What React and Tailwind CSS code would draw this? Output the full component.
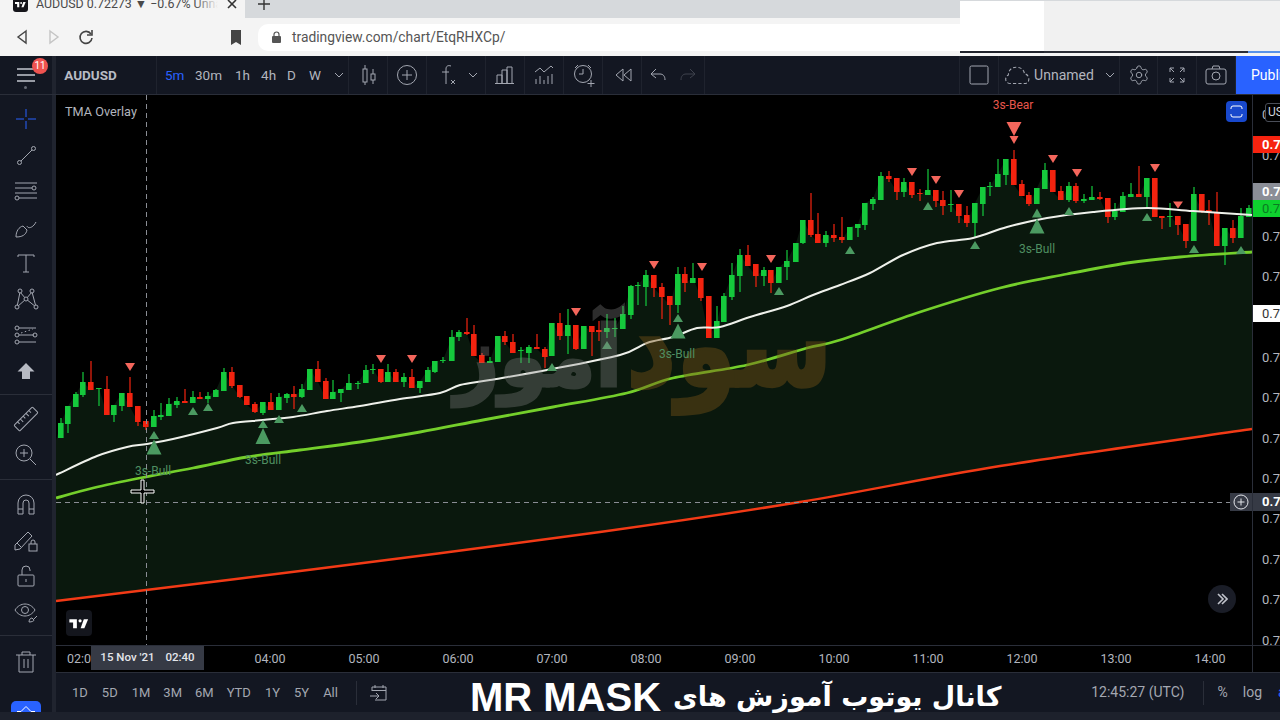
import React from "react";
import { Settings } from "lucide-react";

const CANDLES = [
  [61,423,438,418,438,"g"],[68,406,424,406,433,"g"],[76,394,407,392,407,"g"],[83,382,395,372,397,"g"],[91,382,390,361,390,"r"],[99,388,389,388,406,"g"],[107,389,415,376,415,"r"],[114,405,415,405,422,"g"],[122,393,406,393,411,"g"],[130,393,407,377,407,"r"],[138,406,422,406,426,"r"],[146,421,427,421,430,"r"],[154,416,427,410,427,"g"],[161,415,417,403,420,"g"],[169,404,416,398,416,"g"],[177,401,405,397,408,"g"],[185,401,403,389,403,"r"],[193,397,403,391,403,"g"],[200,397,399,392,399,"r"],[208,396,399,392,403,"g"],[216,390,397,389,397,"g"],[224,372,391,368,391,"g"],[232,372,386,367,388,"r"],[240,385,397,385,398,"r"],[247,396,405,396,405,"r"],[255,404,412,402,413,"r"],[263,402,413,402,415,"g"],[271,402,410,393,410,"r"],[279,397,410,393,410,"g"],[287,394,398,393,403,"g"],[294,394,397,386,409,"r"],[302,389,397,384,398,"g"],[310,369,390,369,390,"g"],[318,369,382,361,382,"r"],[326,381,399,378,399,"r"],[333,392,399,380,399,"g"],[341,389,393,389,402,"g"],[349,383,390,374,390,"g"],[358,383,384,381,389,"g"],
  [366,370,383,365,383,"g"],[373,369,370,364,374,"g"],[381,369,382,369,383,"r"],[388,372,382,364,382,"g"],[396,372,382,369,382,"r"],[404,377,382,373,387,"g"],[412,377,388,369,388,"r"],[420,381,388,381,393,"g"],[428,370,382,367,382,"g"],[435,361,372,361,373,"g"],[443,360,361,357,363,"g"],
  [452,337,361,330,361,"g"],[459,332,337,330,341,"g"],[467,332,334,318,335,"r"],[474,334,356,325,356,"r"],[482,355,363,353,363,"r"],[490,361,363,357,363,"g"],[498,336,362,336,362,"g"],[505,336,342,331,345,"r"],[513,342,353,334,353,"r"],[521,350,351,347,363,"g"],[529,347,353,345,363,"g"],[537,347,349,334,349,"r"],[545,349,357,347,368,"r"],[552,323,356,323,356,"g"],[560,323,336,313,340,"r"],[568,325,336,309,354,"g"],[576,325,349,325,350,"r"],[584,326,349,326,349,"g"],[592,326,332,326,356,"r"],[599,330,332,321,341,"r"],[607,328,332,314,338,"g"],[615,328,329,318,337,"g"],[623,314,329,306,329,"g"],[631,286,315,285,319,"g"],[638,285,286,282,305,"g"],[646,275,287,270,306,"g"],[654,275,288,275,297,"r"],[662,287,297,283,319,"r"],[670,296,305,296,325,"r"],[678,274,305,267,313,"g"],[685,274,283,267,292,"r"],[693,278,283,263,283,"g"],[701,278,298,278,301,"r"],[709,296,338,296,338,"r"],[717,321,338,306,338,"g"],[724,296,322,293,322,"g"],[732,275,297,263,300,"g"],[740,255,276,249,292,"g"],[748,255,266,245,266,"r"],[756,264,276,264,287,"r"],[764,270,276,267,286,"g"],[771,270,283,270,293,"r"],[779,267,283,267,283,"g"],[787,261,267,250,280,"g"],
  [796,243,262,243,262,"g"],[803,220,243,220,244,"g"],[811,220,235,193,237,"r"],[818,234,243,213,243,"r"],[826,235,243,231,247,"g"],[834,235,238,224,242,"r"],[842,237,240,217,243,"r"],[850,227,240,227,240,"g"],[858,224,228,224,237,"g"],
  [865,203,225,203,230,"g"],[873,199,204,197,210,"g"],[881,176,200,172,200,"g"],[889,176,179,171,182,"r"],[897,178,192,178,200,"r"],[904,182,192,178,197,"g"],[912,182,195,182,198,"r"],[920,193,194,189,201,"r"],[928,190,195,169,195,"g"],[936,190,201,190,207,"r"],[943,200,206,191,215,"r"],[951,204,205,190,212,"g"],[959,204,216,204,223,"r"],[967,215,223,206,227,"r"],[975,203,223,203,237,"g"],[983,187,204,187,216,"g"],[990,186,187,182,196,"g"],[998,174,187,159,187,"g"],[1006,159,175,159,185,"g"],[1014,159,185,150,185,"r"],[1022,184,196,180,196,"r"],[1029,195,204,192,206,"r"],[1037,188,204,188,204,"g"],[1045,170,189,163,189,"g"],[1053,170,192,170,192,"r"],[1061,191,200,186,200,"r"],[1069,186,200,182,202,"g"],[1076,186,201,183,203,"r"],[1084,199,201,194,203,"g"],[1092,197,200,186,200,"g"],[1100,197,199,192,200,"r"],[1108,198,217,198,223,"r"],[1115,211,217,203,220,"g"],[1123,196,212,192,212,"g"],[1131,194,197,183,197,"g"],[1139,194,197,166,197,"r"],[1147,178,197,178,208,"g"],[1155,178,217,178,217,"r"],[1162,216,218,216,229,"r"],[1170,216,217,203,227,"g"],[1178,216,225,216,235,"r"],[1186,224,241,224,248,"r"],[1194,194,241,187,241,"g"],[1202,194,211,194,213,"r"],[1209,210,212,200,225,"r"],[1217,212,246,192,246,"r"],[1225,228,246,228,265,"g"],[1233,228,238,220,243,"r"],[1241,216,238,208,238,"g"],[1249,208,217,205,217,"g"],
];

const WHITE = [[56,475],[60,473],[97,456],[127,447],[147,444],[173,439],[217,428],[233,423],[263,420],[293,417],[327,411],[360,406],[400,399],[440,393],[460,385],[490,380],[547,370],[620,355],[647,343],[673,337],[697,328],[720,327],[750,317],[787,306],[813,295],[840,285],[870,273],[903,255],[937,243],[973,238],[1007,227],[1047,218],[1093,212],[1147,208],[1193,211],[1252,215]];
const LIME = [[56,498],[93,488],[140,478],[193,468],[247,457],[300,450],[360,442],[420,432],[483,420],[553,407],[627,393],[673,378],[747,365],[807,348],[840,340],[920,312],[1000,288],[1067,274],[1127,263],[1180,257],[1252,252]];
const RED = [[56,601],[300,571],[600,532],[800,502],[1000,466],[1252,429]];

function smooth(pts) {
  let d = `M${pts[0][0]} ${pts[0][1]}`;
  for (let i = 0; i < pts.length - 1; i++) {
    const p0 = pts[Math.max(i - 1, 0)];
    const p1 = pts[i];
    const p2 = pts[i + 1];
    const p3 = pts[Math.min(i + 2, pts.length - 1)];
    const c1x = p1[0] + (p2[0] - p0[0]) / 6;
    const c1y = p1[1] + (p2[1] - p0[1]) / 6;
    const c2x = p2[0] - (p3[0] - p1[0]) / 6;
    const c2y = p2[1] - (p3[1] - p1[1]) / 6;
    d += `C${c1x} ${c1y} ${c2x} ${c2y} ${p2[0]} ${p2[1]}`;
  }
  return d;
}

const FILL = [
  "56,440",
  ...CANDLES.map(([x, t, b, , , c]) => `${x},${c === "g" ? t : b}`),
  "1252,212",
  ...[...RED].reverse().map(([x, y]) => `${x},${y}`),
].join(" ");

const DOWN = [[130,367,10,8],[381,359,10,8],[412,359,10,8],[576,312,10,8],[654,265,10,8],[702,267,10,8],[771,259,10,8],[912,172,10,8],[936,180,10,8],[959,194,10,8],[1053,159,10,8],[1077,173,10,8],[1155,168,10,8],[1178,205,10,7],[1014,129,15,14],[1014,140,9,8]];
const UP = [[154,435,10,8],[154,447,15,15],[193,411,10,8],[208,407,10,8],[263,424,10,8],[263,436,15,16],[279,419,10,8],[302,408,10,8],[552,367,10,8],[607,345,10,8],[678,318,10,8],[678,331,15,15],[779,291,10,8],[850,250,10,8],[928,206,10,8],[975,245,10,8],[1037,213,10,9],[1037,226,15,15],[1069,211,10,8],[1147,217,10,8],[1194,249,10,8],[1241,250,10,8]];

function Ico({ children, className = "text-[#a3a7b1]", size = 28 }) {
  return (
    <svg width={size} height={size} viewBox="0 0 28 28" fill="none" stroke="currentColor" strokeWidth="1" className={className}>
      {children}
    </svg>
  );
}

function Logo({ className, width = 18, height = 14 }) {
  return (
    <svg width={width} height={height} viewBox="0 0 36 28" fill="currentColor" className={className}>
      <path d="M14 6H0v6h7v11h7z" />
      <circle cx="20" cy="9" r="3" />
      <path d="M28 23h-7l6-17h8z" />
    </svg>
  );
}

function Cell({ w, children, last }) {
  return (
    <div className={`${w} h-full flex items-center justify-center shrink-0 ${last ? "" : "border-r border-[#1f232e]"}`}>
      {children}
    </div>
  );
}

const Chevron = () => (
  <svg width="10" height="6" viewBox="0 0 10 6" fill="none" stroke="#a3a7b1" strokeWidth="1">
    <path d="M1 1l4 4 4-4" />
  </svg>
);

function Chrome() {
  return (
    <div className="relative h-[56px] shrink-0 bg-[#f4f4f4] overflow-hidden">
      <div className="h-[18px] flex bg-[#d6d9dc]">
        <div className="relative w-[245px] h-full bg-[#f4f4f4] flex items-start pl-[13px] overflow-hidden">
          <div className="w-[15px] h-[15px] -mt-[3px] rounded-[3px] bg-[#15151a] flex items-center justify-center text-white shrink-0">
            <Logo width={11} height={9} />
          </div>
          <div className="relative w-[182px] ml-[8px] -mt-[5px] text-[12.4px] leading-[18px] text-[#4a4a4a] whitespace-nowrap overflow-hidden">
            AUDUSD 0.72273 ▼ −0.67% Unnamed
            <div className="absolute right-0 top-0 h-full w-[24px] bg-gradient-to-r from-transparent to-[#f4f4f4]" />
          </div>
          <svg width="10" height="10" viewBox="0 0 10 10" stroke="#333" strokeWidth="1.6" className="ml-[9px] -mt-[1px] shrink-0">
            <path d="M1 1l8 8M9 1l-8 8" />
          </svg>
        </div>
        <svg width="12" height="12" viewBox="0 0 12 12" stroke="#333" strokeWidth="1.4" className="ml-[13px] -mt-[2px] shrink-0">
          <path d="M6 0v12M0 6h12" />
        </svg>
      </div>
      <div className="h-[38px] flex items-center">
        <svg width="12" height="16" viewBox="0 0 12 16" fill="none" stroke="#444" strokeWidth="1.4" className="ml-[16px] shrink-0">
          <path d="M10 2L2 8l8 6z" />
        </svg>
        <svg width="12" height="16" viewBox="0 0 12 16" fill="none" stroke="#c4c4c4" strokeWidth="1.4" className="ml-[20px] shrink-0">
          <path d="M2 2l8 6-8 6z" />
        </svg>
        <svg width="16" height="16" viewBox="0 0 16 16" fill="none" stroke="#444" strokeWidth="1.6" className="ml-[18px] shrink-0">
          <path d="M13 5a6 6 0 1 0 1 4" />
          <path d="M14 1v5H9" />
        </svg>
        <svg width="12" height="15" viewBox="0 0 12 15" fill="#444" className="ml-[136px] shrink-0">
          <path d="M1 0h10v15l-5-3-5 3z" />
        </svg>
        <div className="ml-[16px] w-[702px] h-[27px] bg-white rounded-l-[10px] flex items-center pl-[13px] shrink-0">
          <svg width="11" height="13" viewBox="0 0 11 13" className="shrink-0">
            <rect x="1" y="5" width="9" height="7" rx="1" fill="#555" />
            <path d="M3 5V3.500a2.500 2.500 0 0 1 5 0V5" fill="none" stroke="#555" strokeWidth="1.2" />
          </svg>
          <span className="ml-[10px] text-[13.8px] text-[#555] whitespace-nowrap">tradingview.com/chart/EtqRHXCp/</span>
        </div>
      </div>
      <div className="absolute left-[960px] right-0 top-[1px] h-[52px] flex">
        <div className="w-[84px] h-full bg-white border-b-2 border-[#20232c]" />
        <div className="w-[204px] h-full bg-[#f1f1f1] border-b-2 border-[#2a2d36]" />
        <div className="flex-1 h-full bg-[#f1f1f1] border-b-2 border-[#5a93e8]" />
      </div>
    </div>
  );
}

function Toolbar() {
  return (
    <div className="h-[39px] shrink-0 flex bg-[#131722] border-b border-[#2a2e39] text-[#b2b5be] text-[13.5px]">
      <div className="relative w-[56px] h-full border-r-4 border-[#20242f] flex items-center justify-center shrink-0">
        <svg width="18" height="14" viewBox="0 0 18 14" stroke="#c4c7cf" strokeWidth="1.5">
          <path d="M0 1h18M0 7h18M0 13h18" />
        </svg>
        <div className="absolute left-[32px] top-[2px] w-[16px] h-[16px] rounded-full bg-[#ef5350] text-white text-[10px] leading-[16px] text-center">11</div>
        <div className="absolute left-[24px] top-[30px] w-[3px] h-[3px] rounded-full bg-[#666a75]" />
      </div>
      <Cell w="w-[101px]"><span className="font-bold text-[13.5px] text-[#b8bbc4] -ml-[31px]">AUDUSD</span></Cell>
      <div className="w-[192px] h-full flex items-center border-r border-[#1f232e] shrink-0 relative">
        <span className="ml-[8px] w-[18px] text-[#2962ff]">5m</span>
        <span className="ml-[12px]">30m</span>
        <span className="ml-[13px]">1h</span>
        <span className="ml-[11px]">4h</span>
        <span className="ml-[11px]">D</span>
        <span className="ml-[13px]">W</span>
        <span className="ml-[13px]"><Chevron /></span>
      </div>
      <Cell w="w-[39px]">
        <Ico>
          <path d="M11 4v4M11 21v3M19 8v5M19 19v4" />
          <rect x="9" y="8" width="4" height="13" />
          <rect x="17" y="13" width="4" height="6" />
        </Ico>
      </Cell>
      <Cell w="w-[39px]">
        <Ico><circle cx="14" cy="14" r="9.500" /><path d="M14 9v10M9 14h10" /></Ico>
      </Cell>
      <Cell w="w-[59px]">
        <div className="flex items-center gap-[6px]">
          <Ico><path d="M17 5c-3-1-5 0-5 3v15M8 11h7" /><path d="M17 19l4 4M21 19l-4 4" /></Ico>
          <Chevron />
        </div>
      </Cell>
      <Cell w="w-[39px]">
        <Ico><path d="M6 22v-8h5v8M11 22V9h5v13M16 22V6h5v16M4 22.500h19" /></Ico>
      </Cell>
      <Cell w="w-[39px]">
        <Ico><path d="M5 11l5-4 4 4 7-6 2 2" /><path d="M6 18v5M10 15v8M14 19v4M18 15v8M22 13v10" /></Ico>
      </Cell>
      <Cell w="w-[39px]">
        <Ico>
          <circle cx="14" cy="13" r="8.500" />
          <path d="M14 8v5h-4M6 7l3-3M19 4l3 3M22 19v7M18.500 22.500h7" />
        </Ico>
      </Cell>
      <Cell w="w-[39px]">
        <Ico><path d="M15 8l-7 6 7 6zM23 8l-7 6 7 6z" /></Ico>
      </Cell>
      <Cell w="w-[63px]">
        <div className="flex items-center">
          <Ico><path d="M11 8l-5 5 5 4" /><path d="M6 13h9c3 0 5 2 5 6" /></Ico>
          <Ico className="text-[#3e424d]"><path d="M17 8l5 5-5 4" /><path d="M22 13h-9c-3 0-5 2-5 6" /></Ico>
        </div>
      </Cell>
      <div className="flex-1 h-full border-r border-[#1f232e]" />
      <Cell w="w-[39px]">
        <Ico><rect x="5" y="5" width="18" height="18" rx="1.500" /></Ico>
      </Cell>
      <Cell w="w-[121px]">
        <div className="flex items-center">
          <Ico size={30}><path d="M7 22c-5 0-6-6-2-8 0-5 4-8 9-7 3 0 6 3 6 6 5 0 6 9 0 9z" strokeDasharray="3 2" /></Ico>
          <span className="ml-[1px] text-[14px]">Unnamed</span>
          <span className="ml-[11px]"><Chevron /></span>
        </div>
      </Cell>
      <Cell w="w-[38px]"><Settings size={22} strokeWidth={1} color="#a3a7b1" /></Cell>
      <Cell w="w-[39px]">
        <Ico><path d="M7 11V7h4M21 11V7h-4M7 17v4h4M21 17v4h-4M7 7l4 4M21 7l-4 4M7 21l4-4M21 21l-4-4" /></Ico>
      </Cell>
      <Cell w="w-[39px]">
        <Ico>
          <rect x="4" y="8" width="20" height="15" rx="2" />
          <circle cx="14" cy="15" r="4" />
          <path d="M10 8l1-3h6l1 3" />
        </Ico>
      </Cell>
      <div className="w-[44px] h-full bg-[#2962ff] text-white text-[14px] flex items-center pl-[15px] overflow-hidden shrink-0 whitespace-nowrap">Publish</div>
    </div>
  );
}

function Tool({ children }) {
  return <div className="h-9 flex items-center justify-center">{children}</div>;
}

function LeftTools() {
  return (
    <div className="w-[56px] h-full shrink-0 bg-[#131722] border-r-4 border-[#20242f] overflow-hidden pt-[6px]">
      <Tool><Ico className="text-[#2962ff]"><path d="M14 4v8M14 16v8M4 14h8M16 14h8" /></Ico></Tool>
      <Tool><Ico><path d="M9 20L20 9" /><circle cx="7.500" cy="21.500" r="2" /><circle cx="21.500" cy="7.500" r="2" /></Ico></Tool>
      <Tool><Ico><path d="M3 6h22M3 11h17M3 16h22M7 21h18" /><circle cx="22" cy="11" r="2" /><circle cx="5" cy="21" r="2" /></Ico></Tool>
      <Tool><Ico><path d="M4 24c0-6 3-10 7-11l4 4c-1 5-5 7-11 7z" /><path d="M15 13c1 3 6 2 9-4" /></Ico></Tool>
      <Tool><Ico><path d="M6 6h16M14 6v17M11 23h6M6 6v2M22 6v2" /></Ico></Tool>
      <Tool><Ico><path d="M8 7l6 7 6-7 4 15-10-8-9 8z" /><circle cx="8" cy="6" r="2" fill="#131722" /><circle cx="20" cy="6" r="2" fill="#131722" /><circle cx="14" cy="14" r="2" fill="#131722" /><circle cx="5" cy="22" r="2" fill="#131722" /><circle cx="24" cy="22" r="2" fill="#131722" /></Ico></Tool>
      <Tool><Ico><path d="M7 7h17M7 14h15M7 21h17" /><path d="M9 12l12-4" strokeDasharray="1.500 2.500" /><circle cx="5" cy="7" r="2" /><circle cx="5" cy="14" r="2" /><circle cx="5" cy="21" r="2" /><circle cx="23" cy="14" r="2" /></Ico></Tool>
      <Tool><svg width="28" height="28" viewBox="0 0 28 28" fill="#b7bac3"><path d="M14 6l8.500 8.500H18V22h-8v-7.500H5.500z" /></svg></Tool>
      <div className="h-px mt-[5px] mb-[6px] bg-[#2a2e39]" />
      <Tool><Ico><g transform="rotate(-45 14 14)"><rect x="1" y="10" width="26" height="8" rx="1" /><path d="M6 10v3M10 10v4M14 10v3M18 10v4M22 10v3" /></g></Ico></Tool>
      <Tool><Ico><circle cx="12" cy="12" r="8" /><path d="M12 8v8M8 12h8M18 18l6 6" /></Ico></Tool>
      <div className="h-px mt-[6px] mb-[6px] bg-[#2a2e39]" />
      <Tool><Ico><path d="M6 24V13a8 8 0 0 1 16 0v11h-5V13a3 3 0 0 0-6 0v11zM6 19h5M17 19h5" /></Ico></Tool>
      <Tool><Ico><path d="M3 19L16 6l4 4L8 23l-5 1z" /><path d="M5 17l4 4" /><rect x="17" y="18" width="8" height="7" /><path d="M19 18v-2a2 2 0 0 1 4 0v2" /></Ico></Tool>
      <Tool><Ico><rect x="6" y="13" width="16" height="11" rx="1" /><path d="M10 13V8a4 4 0 0 1 8 0v1" /><path d="M14 17v3" /></Ico></Tool>
      <Tool><Ico><path d="M3 12c5-8 15-8 20 0-5 8-15 8-20 0z" /><circle cx="13" cy="12" r="3.500" /><path d="M17 24c0-3 2-4 3-4l2 2c0 1-2 2-5 2zM22 21l3-3" /></Ico></Tool>
      <div className="h-px mt-[5px] mb-[7px] bg-[#2a2e39]" />
      <Tool><Ico><path d="M7 8v17h14V8M4 8h20M10 8V5h8v3M12 12v9M16 12v9" /></Ico></Tool>
      <div className="mt-[22px] ml-[11px] w-[30px] h-[14px] rounded-t-[5px] bg-[#2962ff] flex items-start justify-center pt-[5px]">
        <svg width="18" height="6" viewBox="0 0 18 6" fill="none" stroke="#fff" strokeWidth="1"><path d="M0 5.500h4l5-5 5 5h4" /></svg>
      </div>
    </div>
  );
}

function Chart() {
  return (
    <svg width="1196" height="550" viewBox="56 95 1196 550" className="block shrink-0 bg-black">
      <polygon points={FILL} fill="#0a180d" />
      {CANDLES.map(([x, t, b, wt, wb, c]) => {
        const col = c === "g" ? "#15c93c" : "#f2230f";
        return (
          <g key={x}>
            <rect x={x - 0.6} y={wt} width="1.200" height={wb - wt} fill={col} />
            <rect x={x - 3} y={t} width="5.600" height={Math.max(b - t, 1)} fill={col} />
          </g>
        );
      })}
      <path d={smooth(WHITE)} fill="none" stroke="#eef0ea" strokeWidth="2" />
      <path d={smooth(LIME)} fill="none" stroke="#74cf2b" strokeWidth="2.800" />
      <path d={smooth(RED)} fill="none" stroke="#f23a16" strokeWidth="2.500" />
      {UP.map(([x, y, w, h], i) => (
        <path key={i} d={`M${x} ${y - h / 2}L${x + w / 2} ${y + h / 2}H${x - w / 2}z`} fill="#4b9a61" />
      ))}
      {DOWN.map(([x, y, w, h], i) => (
        <path key={i} d={`M${x} ${y + h / 2}L${x + w / 2} ${y - h / 2}H${x - w / 2}z`} fill="#f4665c" />
      ))}
      <g className="font-[family-name:'DejaVu_Sans']" fontWeight="700" direction="rtl" strokeWidth="3">
        <text transform="translate(832 386) scale(0.93 1.12)" fontSize="104" fill="#7a5518" stroke="#7a5518" opacity="0.42">سود</text>
        <text transform="translate(622 386) scale(0.92 1)" fontSize="84" fill="#8a8a8a" stroke="#8a8a8a" opacity="0.33">آموز</text>
      </g>
      <g fontSize="12" fill="#4f8f61" textAnchor="middle">
        <text x="153" y="475">3s-Bull</text>
        <text x="263" y="464">3s-Bull</text>
        <text x="677" y="358">3s-Bull</text>
        <text x="1037" y="253">3s-Bull</text>
        <text x="1013" y="109" fill="#e8574d">3s-Bear</text>
      </g>
      <path d="M146.500 95V645" stroke="#8a8d94" strokeDasharray="5 4" />
      <path d="M56 502.500H1230" stroke="#8a8d94" strokeDasharray="5 4" />
      <path d="M141 480h3v10h10v3h-10v10h-3v-10h-10v-3h10z" fill="#000" stroke="#fff" strokeWidth="1" />
      <text x="65" y="116" fontSize="12.700" fill="#b2b5be">TMA Overlay</text>
    </svg>
  );
}

const PRICES = Array.from({ length: 14 }, (_, i) => i);

function PriceAxis() {
  return (
    <div className="relative w-[28px] h-[550px] shrink-0 bg-black border-l border-[#2a2e39] overflow-hidden text-[13px] text-[#b2b5be]">
      {PRICES.map((i) => (
        <div key={i} className="h-[40.4px] flex items-center pl-[9px] whitespace-nowrap">0.725</div>
      ))}
      <div className="absolute left-[12px] top-[8px] w-[30px] h-[19px] bg-black border border-[#4a4e58] rounded-[3px] text-[12px] leading-[17px] pl-[2px] text-[#d0d3da]">USD</div>
      <div className="absolute left-0 right-0 top-[41px] h-[17px] bg-[#f7230f] text-white font-bold text-[13px] leading-[17px] pl-[9px]">0.725</div>
      <div className="absolute left-0 right-0 top-[88px] h-[17px] bg-[#8b8e97] text-white font-bold text-[13px] leading-[17px] pl-[9px]">0.725</div>
      <div className="absolute left-0 right-0 top-[105px] h-[17px] bg-[#0ed12e] text-[#0a7a22] text-[13px] leading-[17px] pl-[9px]">0.725</div>
      <div className="absolute left-0 right-0 top-[210px] h-[17px] bg-white text-[#333] text-[13px] leading-[17px] pl-[9px]">0.725</div>
      <div className="absolute left-0 right-0 top-[398px] h-[18px] bg-[#363a45] text-white font-bold text-[13px] leading-[18px] pl-[9px]">0.725</div>
    </div>
  );
}

function TimeAxis() {
  const hours = ["", "04:00", "05:00", "06:00", "07:00", "08:00", "09:00", "10:00", "11:00", "12:00", "13:00", "14:00"];
  return (
    <div className="relative h-[28px] shrink-0 bg-black border-y border-[#2a2e39] flex text-[12.5px] text-[#b2b5be] overflow-hidden">
      <div className="w-[73px] h-full flex items-center pl-[11px] shrink-0">02:00</div>
      {hours.map((h, i) => (
        <div key={i} className="w-[94px] h-full flex items-center justify-center shrink-0">{h}</div>
      ))}
      <div className="absolute left-[35px] top-0 w-[113px] h-[24px] bg-[#363a45] text-[#e4e6eb] text-[11.500px] font-medium flex items-center justify-center gap-[11px]">
        <span>15 Nov '21</span><span>02:40</span>
      </div>
      <div className="absolute left-[1196px] top-0 h-full w-px bg-[#2a2e39]" />
    </div>
  );
}

function BottomBar() {
  const ranges = [["1D", "ml-[16px]"], ["5D", "ml-[14px]"], ["1M", "ml-[14px]"], ["3M", "ml-[13px]"], ["6M", "ml-[13px]"], ["YTD", "ml-[13px]"], ["1Y", "ml-[14px]"], ["5Y", "ml-[14px]"], ["All", "ml-[14px]"]];
  return (
    <div className="h-[39px] shrink-0 bg-[#131722] flex items-center text-[13px] text-[#a3a7b1]">
      {ranges.map(([r, m]) => (
        <span key={r} className={m}>{r}</span>
      ))}
      <div className="ml-[18px] w-px h-[24px] bg-[#2a2e39]" />
      <svg width="20" height="20" viewBox="0 0 20 20" fill="none" stroke="#a3a7b1" strokeWidth="1" className="ml-[12px]">
        <path d="M3 8V4h14v13H6M3 7.500h14M6 2v3M14 2v3M1 13h9M7 10l3 3-3 3" />
      </svg>
      <span className="ml-auto text-[14px]">12:45:27 (UTC)</span>
      <div className="ml-[19px] w-px h-[24px] bg-[#2a2e39]" />
      <span className="ml-[13px] text-[14px]">%</span>
      <span className="ml-[15px] text-[14px]">log</span>
      <span className="ml-[16px] -mr-[10px] text-[14px] text-[#2962ff] w-[12px] overflow-hidden">auto</span>
    </div>
  );
}

export default function App() {
  return (
    <div className="relative w-[1280px] h-[720px] overflow-hidden bg-[#131722] flex flex-col font-[family-name:Roboto,sans-serif]">
      <Chrome />
      <Toolbar />
      <div className="h-[617px] flex shrink-0">
        <LeftTools />
        <div className="w-[1224px] flex flex-col shrink-0">
          <div className="relative h-[550px] flex shrink-0">
            <Chart />
            <PriceAxis />
            <div className="absolute left-[1170px] top-[6px] w-[21px] h-[21px] rounded-[4px] bg-[#1848cc] flex items-center justify-center">
              <svg width="13" height="13" viewBox="0 0 13 13" fill="none" stroke="#fff" strokeWidth="1"><path d="M1 4V3a2 2 0 0 1 2-2h7a2 2 0 0 1 2 2v1M1 9v1a2 2 0 0 0 2 2h7a2 2 0 0 0 2-2V9" /></svg>
            </div>
            <div className="absolute left-[1174px] top-[398px] w-[22px] h-[18px] bg-[#363a45] flex items-center justify-center">
              <svg width="16" height="16" viewBox="0 0 16 16" fill="none" stroke="#e4e6eb" strokeWidth="1"><circle cx="8" cy="8" r="7" /><path d="M8 4.500v7M4.500 8h7" /></svg>
            </div>
            <div className="absolute left-[1152px] top-[490px] w-[28px] h-[28px] rounded-full bg-[#1a1d27] flex items-center justify-center">
              <svg width="12" height="12" viewBox="0 0 12 12" fill="none" stroke="#c0c3cb" strokeWidth="1.600"><path d="M2 1l5 5-5 5M6 1l5 5-5 5" /></svg>
            </div>
            <div className="absolute left-[10px] top-[515px] w-[26px] h-[26px] rounded-[4px] bg-[#14161d] flex items-center justify-center text-white">
              <Logo width={20} height={15} />
            </div>
          </div>
          <TimeAxis />
          <BottomBar />
        </div>
      </div>
      <div className="h-[8px] shrink-0 bg-[#1d212c]" />
      <div className="absolute left-[470px] top-[676px] flex items-center text-white font-bold whitespace-nowrap leading-[42px]">
        <span className="font-[family-name:'Liberation_Sans'] text-[40px]">MR MASK</span>
        <span dir="rtl" className="ml-[12px] font-[family-name:'DejaVu_Sans'] text-[27px]">کانال یوتوب آموزش های</span>
      </div>
    </div>
  );
}
